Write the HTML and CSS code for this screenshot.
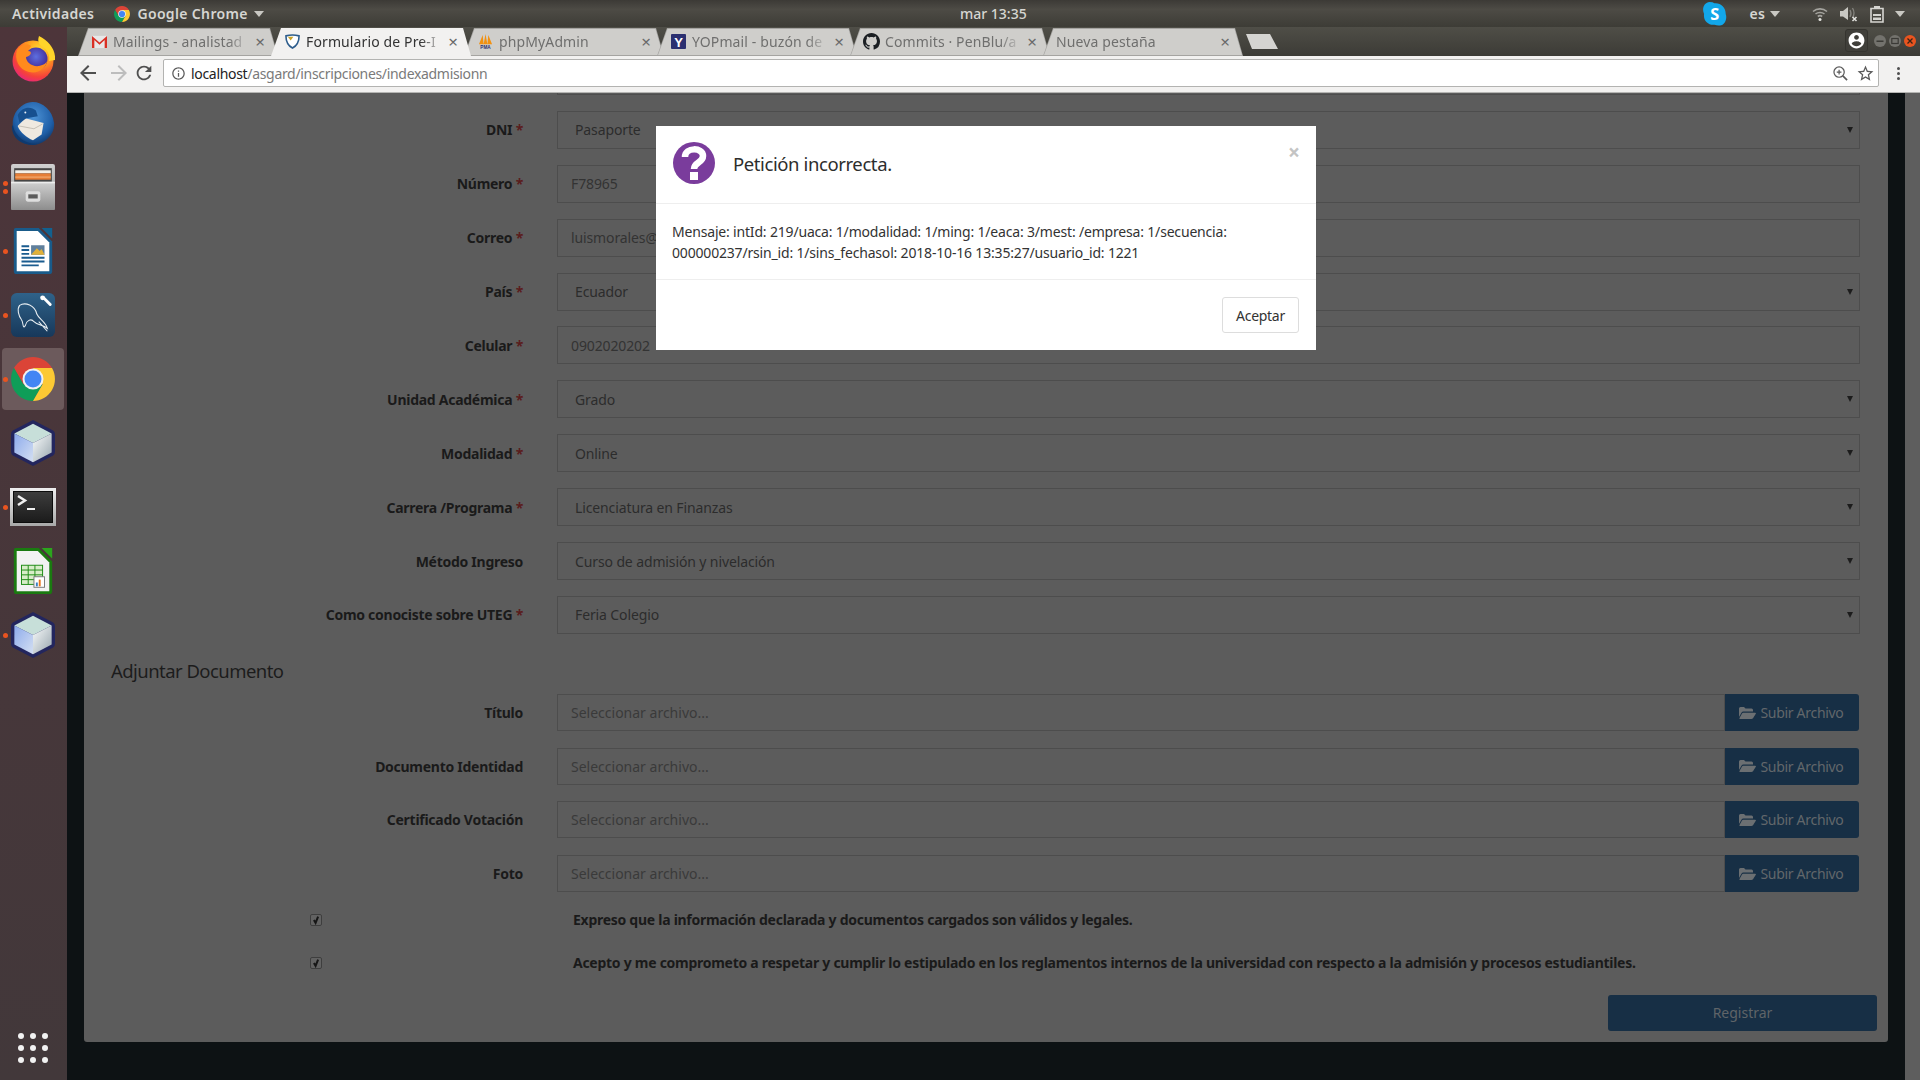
FILE: index.html
```html
<!DOCTYPE html>
<html lang="es">
<head>
<meta charset="utf-8">
<title>Formulario de Pre-Inscripción</title>
<link rel="stylesheet" href="styles.css">
</head>
<body>
<svg class="defs" width="0" height="0" aria-hidden="true">
  <defs>
    <linearGradient id="cubeL" x1="0" y1="0" x2="1" y2="1"><stop offset="0" stop-color="#8dabec"/><stop offset="1" stop-color="#d4dff2"/></linearGradient>
    <linearGradient id="cubeR" x1="0" y1="0" x2="1" y2="1"><stop offset="0" stop-color="#fafcfc"/><stop offset="1" stop-color="#98a6ae"/></linearGradient>
    <linearGradient id="cab" x1="0" y1="0" x2="0" y2="1"><stop offset="0" stop-color="#d0d0d0"/><stop offset="1" stop-color="#8d8d8d"/></linearGradient>
    <linearGradient id="wb" x1="0" y1="0" x2="0" y2="1"><stop offset="0" stop-color="#2f6289"/><stop offset="1" stop-color="#17385a"/></linearGradient>
    <linearGradient id="frame" x1="0" y1="0" x2="0" y2="1"><stop offset="0" stop-color="#eeeeee"/><stop offset="1" stop-color="#a8a8a8"/></linearGradient>
    <linearGradient id="term" x1="0" y1="0" x2="0" y2="1"><stop offset="0" stop-color="#3d3d3d"/><stop offset="1" stop-color="#1b1b1b"/></linearGradient>
    <radialGradient id="ffx" cx=".65" cy=".25" r=".85"><stop offset="0" stop-color="#ffe22e"/><stop offset=".4" stop-color="#ff9a1f"/><stop offset=".75" stop-color="#f5413a"/><stop offset="1" stop-color="#e3208c"/></radialGradient>
    <radialGradient id="ffb" cx=".5" cy=".4" r=".6"><stop offset="0" stop-color="#5d6fe0"/><stop offset="1" stop-color="#40248f"/></radialGradient>
    <radialGradient id="tbd" cx=".5" cy=".35" r=".7"><stop offset="0" stop-color="#4d93d6"/><stop offset=".65" stop-color="#1f5fa8"/><stop offset="1" stop-color="#0d2f5c"/></radialGradient>
    <symbol id="chrome" viewBox="0 0 44 44">
      <path fill="#db4437" d="M3 11A22 22 0 0 1 41 11H22L12.5 27.5Z"/>
      <path fill="#0f9d58" d="M3 11L12.5 27.5H31.5L22 44A22 22 0 0 1 3 11Z"/>
      <path fill="#fcc934" d="M41 11H22L31.5 27.5 22 44A22 22 0 0 0 41 11Z"/>
      <circle cx="22" cy="22" r="10.5" fill="#f1f1f1"/>
      <circle cx="22" cy="22" r="8.5" fill="#4285f4"/>
    </symbol>
    <symbol id="cube" viewBox="0 0 46 48">
      <path fill="#23265e" d="M23 0L44 11Q46 12 46 15V33Q46 36 44 37L23 48 2 37Q0 36 0 33V15Q0 12 2 11Z"/>
      <path fill="#c7dfd9" d="M23 4L42.500 14 23 24 3.500 14Z"/>
      <path fill="url(#cubeL)" d="M3.500 14L23 24V44L3.500 34Z"/>
      <path fill="url(#cubeR)" d="M42.500 14L23 24V44L42.500 34Z"/>
    </symbol>
    <symbol id="folder" viewBox="0 0 17 14">
      <path d="M0 2.5Q0 1 1.5 1H5L6.5 2.5H12.5Q14 2.5 14 4V5.5H4.3Q3.2 5.5 2.6 6.6L0 11Z"/>
      <path d="M4.2 6.7H16.2Q17.4 6.7 16.8 7.8L14 12.2Q13.4 13 12.4 13H1Q0 13 .5 12.1L3 7.6Q3.4 6.7 4.2 6.7Z"/>
    </symbol>
  </defs>
</svg>

<header class="topbar">
  <div class="top-left">
    <span class="acts">Actividades</span>
    <span class="top-app"><svg class="top-chrome"><use href="#chrome"/></svg>Google Chrome<i class="tri"></i></span>
  </div>
  <div class="clock">mar 13:35</div>
  <div class="top-right">
    <svg class="ic-skype" viewBox="0 0 22 22"><path fill="#12a7ea" d="M6 0Q9 0 10.500 1.200C16 .5 21 5 20.800 11 22.500 15 20 22 15 21.500 13.500 21.800 12 21 10.500 20.800 5 21.500 0 17 1 11 -1.500 6 1.500 0 6 0Z"/><text x="11" y="16.500" text-anchor="middle" class="skype-s">S</text></svg>
    <span class="lang">es<i class="tri"></i></span>
    <svg class="ic-wifi" viewBox="0 0 16 16" fill="none" stroke="#a5a49f" stroke-width="1.600"><path d="M1 5.500C5 2 11 2 15 5.500M3.500 8C6 6 10 6 12.500 8M5.800 10.500C7 9.600 9 9.600 10.200 10.500"/><circle cx="8" cy="13.500" r="1.500" fill="#e4e4e0" stroke="none"/></svg>
    <svg class="ic-vol" viewBox="0 0 18 16"><path fill="#c9c8c3" d="M0 5H3L8 1V14L3 10.500H0Z"/><path fill="none" stroke="#85847f" stroke-width="1.300" d="M10 4Q12 7.500 10 11M12.500 2Q15.500 7 12.500 12"/><path stroke="#e4e4e0" stroke-width="1.500" d="M12.500 11L16.500 15M16.500 11L12.500 15"/></svg>
    <svg class="ic-bat" viewBox="0 0 14 18"><path fill="none" stroke="#d6d5d1" stroke-width="1.600" d="M1 3.500H13V17H1Z"/><path fill="#d6d5d1" d="M4 1H10V3.500H4ZM3 9H11V11H3ZM3 12.500H11V15H3Z"/></svg>
    <i class="tri tri-end"></i>
  </div>
</header>

<div class="desktop">
  <nav class="dock">
    <div class="dock-item">
      <svg class="dock-ic" viewBox="0 0 44 46"><circle cx="22" cy="25" r="20.500" fill="url(#ffx)"/><path fill="#ffd42a" d="M28 0C26 6 28 9 33 12 37 15 39 19 38 25L44 24C45 14 38 5 28 0Z"/><circle cx="25" cy="23" r="11.500" fill="url(#ffb)"/><path fill="#ff8a1d" d="M6 14C10 8 17 7 20 10L17 15C22 15 20 20 15 21 15 26 21 31 28 30 33 29 35 27 36 25 35 33 27 38 18 36 8 34 3 23 6 14Z"/></svg>
    </div>
    <div class="dock-item">
      <svg class="dock-ic" viewBox="0 0 44 48"><path fill="url(#tbd)" d="M12 5C24 -3 42 6 44 24 45 36 35 45 24 47 12 48 2 40 1 28 0 18 4 10 12 5Z"/><path fill="#0e3a70" d="M1 26C3 38 14 46 26 46 14 49 0 42 0 28Z"/><path fill="#efe9e0" d="M6 27L14 19 33 24 31 36 22 42C15 39 9 34 6 27Z"/><path fill="none" stroke="#c4beb4" stroke-width="1" d="M7 27L23 30 32 25"/><path fill="#17508f" d="M6 16C10 7 20 6 25 11L27 17 15 19 8 24Z"/><circle cx="14" cy="13" r="1" fill="#e8f0f8"/></svg>
    </div>
    <div class="dock-item">
      <i class="run run-a"></i><i class="run run-b"></i>
      <svg class="dock-ic" viewBox="0 0 42 44"><rect y="0" width="42" height="44" rx="2" fill="url(#cab)"/><rect x="3" y="4" width="36" height="14" fill="#454545"/><rect x="4" y="6" width="34" height="3" fill="#f4efe6"/><rect x="4" y="9" width="34" height="6" fill="#e67e36"/><rect x="4" y="12" width="34" height="1" fill="#f3b178"/><rect x="0" y="17" width="42" height="27" rx="1" fill="url(#cab)"/><rect y="17" width="42" height="1.500" fill="#ececec"/><rect x="14" y="26" width="14" height="10" rx="2" fill="#dedede"/><rect x="16.500" y="29" width="9" height="4" fill="#5c5c5c"/></svg>
    </div>
    <div class="dock-item">
      <i class="run"></i>
      <svg class="dock-ic" viewBox="0 0 40 48"><path fill="#195b8a" d="M2 0H26L40 14V45Q40 48 37 48H3Q0 48 0 45V2Q0 0 2 0Z"/><path fill="#fff" d="M3 3H25L37 15V45H3Z"/><path fill="#4d353a" d="M27 0H40V13Z"/><path fill="#12618f" d="M29 0H40V11Z"/><path fill="#1b5c8f" d="M8 18H16V20H8ZM8 22H16V24H8ZM8 26H16V28H8ZM8 30H32V32H8ZM8 34H32V36H8ZM8 38H26V40H8Z"/><rect x="18" y="18" width="14" height="10" fill="#5f7f9c"/><path fill="#e0b13a" d="M18 28L24 21 27 24 29 22 32 28Z"/></svg>
    </div>
    <div class="dock-item">
      <i class="run"></i>
      <svg class="dock-ic" viewBox="0 0 46 46"><rect width="46" height="46" rx="6" fill="url(#wb)"/><path fill="none" stroke="#e8eef2" stroke-width="1.100" d="M9 13C15 9 25 13 27 22 29 27 36 30 38 37 33 33 28 34 24 30 21 26 16 29 15 34 12 39 13 30 11 28 8 24 6 17 9 13ZM29 30L38 40"/><path stroke="#fff" stroke-width="3" stroke-linecap="round" d="M34 5L41 12"/><circle cx="33" cy="5" r="2.500" fill="#fff"/></svg>
    </div>
    <div class="dock-item dock-active">
      <i class="run"></i>
      <svg class="dock-ic"><use href="#chrome"/></svg>
    </div>
    <div class="dock-item">
      <svg class="dock-ic"><use href="#cube"/></svg>
    </div>
    <div class="dock-item">
      <i class="run"></i>
      <svg class="dock-ic dock-term" viewBox="0 0 46 38"><rect width="46" height="38" fill="url(#frame)"/><rect x="3.500" y="3.500" width="39" height="31" fill="url(#term)" stroke="#0c0c0c"/><path fill="none" stroke="#f0f0f0" stroke-width="2.500" d="M8 8L15 12.500 8 17"/><path stroke="#f0f0f0" stroke-width="2" d="M17 21H25"/></svg>
    </div>
    <div class="dock-item">
      <svg class="dock-ic" viewBox="0 0 40 48"><path fill="#1a7a10" d="M2 0H26L40 14V45Q40 48 37 48H3Q0 48 0 45V2Q0 0 2 0Z"/><path fill="#f2f2f2" d="M3 3H25L37 15V45H3Z"/><path fill="#4d353a" d="M27 0H40V13Z"/><path fill="#2ba51d" d="M29 0H40V11Z"/><rect x="8" y="18" width="22" height="20" fill="#d8edc8" stroke="#1e8a14"/><path stroke="#1e8a14" d="M8 23H30M8 28H30M8 33H30M15 18V38M22 18V38"/><rect x="21" y="30" width="11" height="11" fill="#fff" stroke="#777"/><path fill="#e8741c" d="M26 33H28V40H26Z"/><path fill="#3a7fc2" d="M23 36H25V40H23Z"/></svg>
    </div>
    <div class="dock-item">
      <i class="run"></i>
      <svg class="dock-ic"><use href="#cube"/></svg>
    </div>
    <div class="dock-grid"><i></i><i></i><i></i><i></i><i></i><i></i><i></i><i></i><i></i></div>
  </nav>

  <div class="browser">
    <div class="tabbar">
      <div class="tab">
        <svg class="fav" viewBox="0 0 16 14"><path fill="#e8e8e8" d="M0 1H16V14H0Z"/><path fill="#d93025" d="M0 1L8 8 16 1V14H13.500V5.500L8 10.500 2.500 5.500V14H0Z"/></svg>
        <span class="tab-title">Mailings - analistad</span><span class="tab-x">×</span>
      </div>
      <div class="tab tab-on">
        <svg class="fav" viewBox="0 0 16 16"><path fill="#fff" stroke="#2e5d8c" stroke-width="1.700" d="M1 2Q8 0 15 2 15 11 8 15 1 11 1 2Z"/><path fill="#c9a227" d="M3 3H9L6 7Z"/></svg>
        <span class="tab-title">Formulario de Pre-I</span><span class="tab-x">×</span>
      </div>
      <div class="tab">
        <svg class="fav" viewBox="0 0 16 16"><path fill="#f29111" d="M1 11L5 1 6 11ZM6 11L8 0 10 11ZM10 11L11 1 15 11Z"/><text x="8" y="15.500" text-anchor="middle" class="pma">PMA</text></svg>
        <span class="tab-title">phpMyAdmin</span><span class="tab-x">×</span>
      </div>
      <div class="tab">
        <svg class="fav" viewBox="0 0 16 16"><rect width="16" height="16" rx="1" fill="#2b2f70"/><text x="8" y="13.500" text-anchor="middle" class="yop">Y</text></svg>
        <span class="tab-title">YOPmail - buzón de</span><span class="tab-x">×</span>
      </div>
      <div class="tab">
        <svg class="fav fav-gh" viewBox="0 0 16 16"><path fill="#1b1f23" d="M8 0C3.58 0 0 3.58 0 8c0 3.54 2.29 6.53 5.47 7.59.4.07.55-.17.55-.38 0-.19-.01-.82-.01-1.49-2.01.37-2.53-.49-2.69-.94-.09-.23-.48-.94-.82-1.13-.28-.15-.68-.52-.01-.53.63-.01 1.08.58 1.23.82.72 1.21 1.87.87 2.33.66.07-.52.28-.87.51-1.07-1.78-.2-3.64-.89-3.64-3.95 0-.87.31-1.59.82-2.15-.08-.2-.36-1.02.08-2.12 0 0 .67-.21 2.2.82.64-.18 1.32-.27 2-.27.68 0 1.36.09 2 .27 1.53-1.04 2.2-.82 2.2-.82.44 1.1.16 1.92.08 2.12.51.56.82 1.27.82 2.15 0 3.07-1.87 3.75-3.65 3.95.29.25.54.73.54 1.48 0 1.07-.01 1.93-.01 2.2 0 .21.15.46.55.38A8.013 8.013 0 0016 8c0-4.42-3.58-8-8-8z"/></svg>
        <span class="tab-title">Commits · PenBlu/a</span><span class="tab-x">×</span>
      </div>
      <div class="tab tab-plain">
        <span class="tab-title">Nueva pestaña</span><span class="tab-x">×</span>
      </div>
      <div class="newtab"></div>
      <div class="win">
        <div class="profile"><svg viewBox="0 0 24 24"><path fill="#fff" d="M12 2C6.480 2 2 6.480 2 12s4.480 10 10 10 10-4.480 10-10S17.520 2 12 2zm0 3c1.660 0 3 1.340 3 3s-1.340 3-3 3-3-1.340-3-3 1.340-3 3-3zm0 14.200c-2.500 0-4.710-1.280-6-3.220.03-1.990 4-3.080 6-3.080 1.990 0 5.970 1.090 6 3.080-1.290 1.940-3.500 3.220-6 3.220z"/></svg></div>
        <svg class="wbtn" viewBox="0 0 12 12"><circle cx="6" cy="6" r="6" fill="#73726d"/><rect x="2.500" y="5.500" width="7" height="1.500" fill="#3b3a36"/></svg>
        <svg class="wbtn" viewBox="0 0 12 12"><circle cx="6" cy="6" r="6" fill="#73726d"/><rect x="2.800" y="3.500" width="6.400" height="5" fill="none" stroke="#3b3a36" stroke-width="1.200"/></svg>
        <svg class="wbtn" viewBox="0 0 12 12"><circle cx="6" cy="6" r="6" fill="#e9541f"/><path stroke="#3a2216" stroke-width="1.300" d="M3.500 3.500L8.500 8.500M8.500 3.500L3.500 8.500"/></svg>
      </div>
    </div>

    <div class="toolbar">
      <svg class="nav" viewBox="0 0 24 24"><path fill="#4f4f4f" d="M20 11H7.830l5.590-5.590L12 4l-8 8 8 8 1.410-1.410L7.830 13H20v-2z"/></svg>
      <svg class="nav" viewBox="0 0 24 24"><path fill="#bdbdbd" d="M4 11h12.170l-5.590-5.590L12 4l8 8-8 8-1.410-1.410L16.170 13H4v-2z"/></svg>
      <svg class="nav nav-r" viewBox="0 0 24 24"><path fill="#4f4f4f" d="M17.650 6.350C16.200 4.900 14.210 4 12 4c-4.420 0-7.990 3.580-7.990 8s3.570 8 7.990 8c3.730 0 6.840-2.550 7.730-6h-2.080c-.82 2.330-3.040 4-5.650 4-3.310 0-6-2.690-6-6s2.690-6 6-6c1.660 0 3.140.69 4.220 1.780L13 11h7V4l-2.350 2.350z"/></svg>
      <div class="omnibox">
        <svg class="info" viewBox="0 0 24 24"><path fill="#5a5a5a" d="M11 7h2v2h-2zm0 4h2v6h-2zm1-9C6.480 2 2 6.480 2 12s4.480 10 10 10 10-4.480 10-10S17.520 2 12 2zm0 18c-4.410 0-8-3.590-8-8s3.590-8 8-8 8 3.590 8 8-3.590 8-8 8z"/></svg>
        <span class="url"><b>localhost</b>/asgard/inscripciones/indexadmisionn</span>
        <svg class="zoomi" viewBox="0 0 16 16" fill="none" stroke="#5a5a5a" stroke-width="1.300"><circle cx="6.500" cy="6.500" r="5.500"/><path d="M4 6.500H9M6.500 4V9"/><path stroke-width="1.800" d="M10.500 10.500L15 15"/></svg>
        <svg class="star" viewBox="0 0 24 24"><path fill="#5a5a5a" d="M22 9.240l-7.190-.62L12 2 9.190 8.630 2 9.240l5.460 4.730L5.820 21 12 17.270 18.180 21l-1.630-7.030L22 9.240zM12 15.400l-3.760 2.270 1-4.280-3.320-2.880 4.380-.38L12 6.100l1.710 4.040 4.380.38-3.320 2.880 1 4.280L12 15.400z"/></svg>
      </div>
      <div class="kebab"><i></i><i></i><i></i></div>
    </div>

    <main class="page">
      <div class="card">
        <div class="row"><span></span><div class="field"></div></div>
        <div class="row"><label class="lbl">DNI <em>*</em></label><div class="field sel">Pasaporte</div></div>
        <div class="row"><label class="lbl">Número <em>*</em></label><div class="field">F78965</div></div>
        <div class="row"><label class="lbl">Correo <em>*</em></label><div class="field">luismorales@</div></div>
        <div class="row"><label class="lbl">País <em>*</em></label><div class="field sel">Ecuador</div></div>
        <div class="row"><label class="lbl">Celular <em>*</em></label><div class="field">0902020202</div></div>
        <div class="row"><label class="lbl">Unidad Académica <em>*</em></label><div class="field sel">Grado</div></div>
        <div class="row"><label class="lbl">Modalidad <em>*</em></label><div class="field sel">Online</div></div>
        <div class="row"><label class="lbl">Carrera /Programa <em>*</em></label><div class="field sel">Licenciatura en Finanzas</div></div>
        <div class="row"><label class="lbl">Método Ingreso</label><div class="field sel">Curso de admisión y nivelación</div></div>
        <div class="row"><label class="lbl">Como conociste sobre UTEG <em>*</em></label><div class="field sel">Feria Colegio</div></div>

        <h3 class="section">Adjuntar Documento</h3>

        <div class="row row-file"><label class="lbl">Título</label><div class="group"><div class="field">Seleccionar archivo...</div><button class="upload"><svg><use href="#folder"/></svg>Subir Archivo</button></div></div>
        <div class="row row-file"><label class="lbl">Documento Identidad</label><div class="group"><div class="field">Seleccionar archivo...</div><button class="upload"><svg><use href="#folder"/></svg>Subir Archivo</button></div></div>
        <div class="row row-file"><label class="lbl">Certificado Votación</label><div class="group"><div class="field">Seleccionar archivo...</div><button class="upload"><svg><use href="#folder"/></svg>Subir Archivo</button></div></div>
        <div class="row row-file"><label class="lbl">Foto</label><div class="group"><div class="field">Seleccionar archivo...</div><button class="upload"><svg><use href="#folder"/></svg>Subir Archivo</button></div></div>

        <div class="row row-check"><span class="box"><svg viewBox="0 0 12 12"><path fill="none" stroke="#161616" stroke-width="2.400" d="M3.500 6L5.500 9.500 8.500 2"/></svg></span><p class="legal">Expreso que la información declarada y documentos cargados son válidos y legales.</p></div>
        <div class="row row-check"><span class="box"><svg viewBox="0 0 12 12"><path fill="none" stroke="#161616" stroke-width="2.400" d="M3.500 6L5.500 9.500 8.500 2"/></svg></span><p class="legal">Acepto y me comprometo a respetar y cumplir lo estipulado en los reglamentos internos de la universidad con respecto a la admisión y procesos estudiantiles.</p></div>

        <div class="actions"><button class="submit">Registrar</button></div>
      </div>
      <div class="scrollstrip"></div>

      <div class="modal">
        <div class="modal-head">
          <svg class="qmark" viewBox="0 0 42 42"><ellipse cx="21" cy="21" rx="21" ry="21" fill="#7a3c9c"/><path fill="none" stroke="#fff" stroke-width="6.500" d="M12 15C12 5 30 5 30 14 30 21 21 20 21 27"/><rect x="17" y="30" width="8" height="8" fill="#fff"/></svg>
          <h4 class="modal-title">Petición incorrecta.</h4>
          <span class="modal-x">×</span>
        </div>
        <div class="modal-body">Mensaje: intId: 219/uaca: 1/modalidad: 1/ming: 1/eaca: 3/mest: /empresa: 1/secuencia: 000000237/rsin_id: 1/sins_fechasol: 2018-10-16 13:35:27/usuario_id: 1221</div>
        <div class="modal-foot"><button class="accept">Aceptar</button></div>
      </div>
    </main>
  </div>
</div>
</body>
</html>
```

FILE: styles.css
```css
* { box-sizing: border-box; }
html, body { margin: 0; height: 100%; }
body {
  width: 1920px; height: 1080px; overflow: hidden;
  display: flex; flex-direction: column;
  font-family: "Noto Sans", "Open Sans", sans-serif;
  background: #0d1214;
}
.defs { position: absolute; }
i { font-style: normal; display: block; }

/* system top bar */
.topbar {
  flex: 0 0 27px;
  display: grid; grid-template-columns: 960px auto 1fr; align-items: center;
  background: linear-gradient(#3c3a36, #4d4b45 35%, #3d3c36);
  color: #d6d6d2; font-size: 14px; font-weight: 600; letter-spacing: .35px;
}
.top-left { display: flex; align-items: center; gap: 20px; padding-left: 12px; }
.top-app { display: flex; align-items: center; }
.top-chrome { width: 16px; height: 16px; margin-right: 7px; }
.tri { display: inline-block; width: 0; height: 0; border: 5px solid transparent; border-top: 6px solid #c9c8c3; border-bottom: 0; margin-left: 6px; }
.clock { font-size: 14px; font-weight: 500; letter-spacing: 0; }
.top-right { display: flex; align-items: center; justify-content: flex-end; padding-right: 15px; }
.ic-skype { width: 24px; height: 24px; margin-right: 23px; }
.skype-s { fill: #fff; font: 700 15px "Noto Sans", sans-serif; }
.lang { display: flex; align-items: center; margin-right: 32px; letter-spacing: .2px; }
.lang .tri { margin-left: 5px; }
.ic-wifi { width: 16px; height: 16px; margin-right: 12px; }
.ic-vol { width: 18px; height: 16px; margin-right: 12px; }
.ic-bat { width: 14px; height: 18px; margin-right: 4px; }
.tri-end { margin-left: 7px; }

/* dock */
.desktop { flex: 1; display: flex; min-height: 0; }
.dock {
  flex: 0 0 67px; display: flex; flex-direction: column;
  background: linear-gradient(#4d353a, #42383a);
}
.dock-item { position: relative; height: 64px; display: flex; align-items: center; justify-content: center; padding-right: 1px; }
.dock-ic { width: 44px; height: 46px; }
.dock-term { height: 38px; width: 46px; }
.dock-active { margin: 1px 3px 1px 2px; padding-right: 0; background: #6c5a5c; border-radius: 4px; height: 62px; }
.run { position: absolute; left: 2.500px; top: 29.500px; width: 5px; height: 5px; border-radius: 50%; background: #e95420; }
.dock-active .run { left: .5px; top: 28.500px; }
.run-a { top: 25.500px; }
.run-b { top: 33.500px; }
.dock-grid { margin-top: auto; margin-bottom: 17px; margin-left: 18px; display: grid; grid-template-columns: repeat(3, 6px); gap: 6px; }
.dock-grid i { width: 6px; height: 6px; border-radius: 50%; background: #f2f2f2; }

/* browser chrome */
.browser { flex: 1; min-width: 0; display: flex; flex-direction: column; }
.tabbar {
  flex: 0 0 29px; display: flex; align-items: flex-end; padding-left: 11px;
  background: linear-gradient(#4f4e47, #3c3b36);
  position: relative;
}
.tab {
  position: relative; width: 200px; height: 28px; margin-right: -7px;
  display: flex; align-items: center; padding: 0 11px 2px 14px;
  font-size: 14px; color: #6f6f6e;
}
.tab::before, .tab::after { content: ""; position: absolute; inset: 0; z-index: 0; }
.tab::before { background: #a5a4a1; clip-path: polygon(0 100%, 10px 0, 192px 0, 200px 100%); }
.tab::after { background: #cfcecb; top: 1px; bottom: 1px; left: 1px; right: 1px; clip-path: polygon(0 100%, 9.500px 0, 190.500px 0, 198px 100%); }
.tab > * { position: relative; z-index: 1; }
.tab-on { z-index: 2; color: #333; }
.tab-on::before { background: #f2f1f0; }
.tab-on::after { background: #f2f1f0; bottom: 0; }
.tab-plain { padding-left: 13px; }
.fav { flex: none; width: 15px; height: 15px; margin-right: 6px; }
.fav-gh { width: 17px; height: 17px; margin-right: 5px; margin-left: -1px; }
.pma { font: 700 5px "Liberation Sans", sans-serif; fill: #2b2f70; }
.yop { font: 700 14px "Liberation Sans", sans-serif; fill: #fff; }
.tab-title {
  flex: 1; min-width: 0; white-space: nowrap; overflow: hidden; letter-spacing: .12px;
  -webkit-mask-image: linear-gradient(90deg, #000 calc(100% - 22px), transparent 100%);
  mask-image: linear-gradient(90deg, #000 calc(100% - 22px), transparent 100%);
}
.tab-x { flex: none; width: 14px; text-align: center; font-size: 17px; line-height: 1; color: #6a6a6a; margin-left: 3px; }
.newtab { margin-left: 10px; margin-bottom: 7px; width: 32px; height: 15px; background: #d5d4d1; clip-path: polygon(0 0, 24px 0, 32px 100%, 6px 100%); }
.win { margin-left: auto; align-self: stretch; display: flex; align-items: flex-start; padding-right: 1px; }
.profile { margin-top: 2px; width: 23px; height: 23px; margin-right: 6px; border: 1px solid #35342f; border-radius: 3px; background: #403f3a; display: flex; align-items: center; justify-content: center; }
.profile svg { width: 19px; height: 19px; }
.wbtn { width: 12px; height: 12px; margin-top: 8px; margin-right: 3px; }

.toolbar {
  flex: 0 0 37px; display: flex; align-items: center; padding: 0 0 2px 9px;
  background: #f2f1f0; border-bottom: 1px solid #b5b5b3;
}
.nav { width: 24px; height: 24px; margin-right: 7px; }
.nav-r { width: 22px; height: 22px; margin-right: 8px; margin-left: -5px; }
.omnibox {
  width: 1716px; height: 28px; display: flex; align-items: center; padding: 0 3px 0 7px;
  background: #fff; border: 1px solid #b3b3b1; border-radius: 2px;
}
.info { width: 15px; height: 15px; margin-right: 5px; }
.url { flex: 1; font-size: 14px; color: #7a7a7a; letter-spacing: -.32px; }
.url b { font-weight: 400; color: #222; }
.zoomi { width: 15px; height: 15px; margin-right: 8px; }
.star { width: 19px; height: 19px; }
.kebab { margin-left: 18px; display: flex; flex-direction: column; gap: 2px; }
.kebab i { width: 3px; height: 3px; border-radius: 50%; background: #4f4f4f; }

/* page */
.page { position: relative; flex: 1; min-height: 0; overflow: hidden; display: flex; padding-left: 17px; background: #0d1214; font-family: "Noto Sans", sans-serif; }
.card {
  flex: 0 0 1804px; align-self: flex-start; margin-top: -36px; padding: 0 28px 11px 0;
  background: #5c5c5c; border-radius: 0 0 3px 3px;
}
.scrollstrip { position: absolute; top: 0; bottom: 0; right: 0; width: 15px; background: #5e5e5e; }
.row { display: grid; grid-template-columns: 439px 1fr; column-gap: 34px; align-items: center; height: 38px; margin-bottom: 15.900px; }
.lbl { text-align: right; font-weight: 700; font-size: 14px; letter-spacing: -.27px; color: #1a1a1a; }
.lbl em { font-style: normal; color: #5a1c1c; }
.field {
  height: 100%; display: flex; align-items: center; padding-left: 13px;
  border: 1px solid #4d4d4d; font-size: 14px; letter-spacing: -.12px; color: #333;
  background: #5c5c5c;
}
.sel { position: relative; padding-left: 17px; color: #2c2c2c; }
.sel::after { content: ""; position: absolute; right: 6px; top: 15px; border: 3.500px solid transparent; border-top: 6px solid #1c1c1c; border-bottom: 0; }
.section { margin: 23.200px 0 9px 27px; font-size: 18.500px; line-height: 28px; font-weight: 400; letter-spacing: -.55px; color: #1c1c1c; }
.row-file { height: 37px; margin-bottom: 16.670px; }
.group { display: flex; height: 100%; margin-right: 1px; }
.group .field { flex: 1; color: #3a3a3a; letter-spacing: 0; }
.upload {
  flex: 0 0 134px; display: flex; align-items: center; justify-content: center; gap: 4px;
  border: 0; background: #172f45; border-radius: 0 3px 3px 0; padding: 0 1px 0 0;
  font: 14px "Noto Sans", sans-serif; letter-spacing: -.3px; color: #62676b;
}
.upload svg { width: 17px; height: 14px; fill: #6b6f72; }
.row-check { height: 22px; margin-bottom: 21px; }
.box { margin-left: 226px; width: 12px; height: 12px; border: 1px solid #3e3e3e; border-radius: 2px; background: #626262; display: block; }
.box svg { display: block; width: 10px; height: 10px; }
.legal { margin: 0 0 0 16px; font-weight: 700; font-size: 14px; letter-spacing: -.27px; color: #1a1a1a; white-space: nowrap; }
.actions { display: flex; justify-content: flex-end; margin: 2px -17px 0 0; }
.submit { width: 269px; height: 36px; border: 0; border-radius: 3px; background: #172f45; font: 14px "Noto Sans", sans-serif; color: #5f6468; }

/* modal */
.modal { position: absolute; left: 589px; top: 33px; width: 660px; height: 224px; display: flex; flex-direction: column; background: #fff; color: #333; }
.modal-head { position: relative; flex: 0 0 78px; display: flex; align-items: center; gap: 18px; padding: 0 0 2px 17px; border-bottom: 1px solid #eee; }
.qmark { width: 42px; height: 42px; margin-top: -1px; }
.modal-title { margin: 0; font-size: 18.500px; font-weight: 400; letter-spacing: -.4px; color: #2d2d2d; }
.modal-x { position: absolute; right: 16px; top: 12px; font-size: 21px; font-weight: 700; line-height: 1.4; color: #c4c4c4; }
.modal-body { flex: 0 0 76px; padding: 17px 16px 0; font-size: 14px; line-height: 21px; letter-spacing: -.18px; border-bottom: 1px solid #eee; }
.modal-foot { flex: 1; display: flex; justify-content: flex-end; align-items: flex-start; padding: 17px 17px 0 0; }
.accept { width: 77px; height: 36px; background: #fff; border: 1px solid #ddd; border-radius: 3px; font: 14px "Noto Sans", sans-serif; letter-spacing: -.3px; color: #333; }
```
